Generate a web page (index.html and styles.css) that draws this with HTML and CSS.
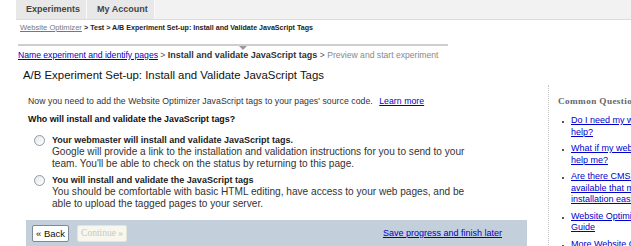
FILE: index.html
```html
<!DOCTYPE html>
<html lang="en">
<head>
    <meta charset="UTF-8">
    <title>Website Optimizer</title>
    <link rel="stylesheet" href="styles.css">
</head>
<body>

<div class="topbar">
    <ul class="tabs">
        <li>Experiments</li>
        <li>My Account</li>
    </ul>
</div>

<div class="crumbs">
    <a href="#">Website Optimizer</a> <b>&gt; Test &gt; A/B Experiment Set-up: Install and Validate JavaScript Tags</b>
</div>

<div class="steps">
    <a href="#">Name experiment and identify pages</a>
    <span class="sep">&gt;</span>
    <span class="current">Install and validate JavaScript tags</span>
    <span class="sep">&gt;</span>
    <span class="next">Preview and start experiment</span>
</div>

<h1>A/B Experiment Set-up: Install and Validate JavaScript Tags</h1>

<div class="layout">
    <div class="main">
        <p class="intro">Now you need to add the Website Optimizer JavaScript tags to your pages' source code. <a href="#">Learn more</a></p>
        <h2 class="question">Who will install and validate the JavaScript tags?</h2>

        <div class="option first">
            <span class="radio"></span>
            <div class="option-text">
                <b>Your webmaster will install and validate JavaScript tags.</b>
                <p>Google will provide a link to the installation and validation instructions for you to send to your team. You'll be able to check on the status by returning to this page.</p>
            </div>
        </div>
        <div class="option">
            <span class="radio"></span>
            <div class="option-text">
                <b>You will install and validate the JavaScript tags</b>
                <p>You should be comfortable with basic HTML editing, have access to your web pages, and be able to upload the tagged pages to your server.</p>
            </div>
        </div>

        <div class="actions">
            <button class="btn">&laquo; Back</button>
            <button class="btn disabled">Continue &raquo;</button>
            <a href="#" class="save">Save progress and finish later</a>
        </div>
    </div>

    <div class="aside">
        <h3>Common Questions</h3>
        <ul>
            <li><a href="#">Do I need my webmaster's help?</a></li>
            <li><a href="#">What if my webmaster can't help me?</a></li>
            <li><a href="#">Are there CMS plugins available that make installation easier?</a></li>
            <li><a href="#">Website Optimizer Installation Guide</a></li>
            <li><a href="#">More Website Optimizer help</a></li>
        </ul>
    </div>
</div>

</body>
</html>
```

FILE: styles.css
```css
*{
    margin: 0;
    padding: 0;
}
html, body{
    overflow: hidden;
}
body{
    width: 760px;
    font-family: "Liberation Sans", Arial, sans-serif;
    font-size: 10px;
    color: #333;
    background: #fff;
}
a{
    color: #0000cc;
}

/* top tabs */
.topbar{
    height: 19px;
    margin-left: 16px;
    background: #f2f2f2;
    border-bottom: 1px solid #dcdcdc;
}
.tabs{
    display: flex;
    height: 19px;
}
.tabs li{
    list-style: none;
    padding: 0 6px 0 10px;
    line-height: 19px;
    font-size: 9px;
    font-weight: bold;
    color: #444;
    background: #e8e8e8;
    border-right: 1px solid #fafafa;
}

/* breadcrumb */
.crumbs{
    height: 23px;
    padding: 1px 0 0 20px;
    line-height: 14px;
    font-size: 7.6px;
    color: #222;
}
.crumbs a{
    color: #777;
}
.crumbs b{
    font-size: 7.1px;
}

/* step line */
.steps{
    width: 430px;
    margin-left: 18px;
    border-top: 2px solid #cfcfcf;
    padding-top: 2px;
    line-height: 14px;
    font-size: 8.6px;
    color: #555;
}
.steps .current{
    position: relative;
    font-size: 9px;
    font-weight: bold;
    color: #333;
}
.steps .current::after{
    content: "";
    position: absolute;
    left: 50%;
    top: -4px;
    margin-left: -4px;
    border: 4px solid transparent;
    border-top-color: #999;
    border-bottom: 0;
}
.steps .next{
    color: #888;
}

h1{
    margin: 5px 0 0 23px;
    line-height: 16px;
    font-size: 11.4px;
    font-weight: normal;
    color: #111;
}

/* body */
.layout{
    display: flex;
    margin-top: 2px;
}
.main{
    width: 501px;
    margin-left: 26px;
}
.intro{
    padding: 10px 0 0 2px;
    line-height: 12px;
    font-size: 8.7px;
    letter-spacing: 0.05px;
}
.intro a{
    margin-left: 4px;
}
.question{
    margin-top: 5px;
    padding-left: 2px;
    line-height: 14px;
    font-size: 8.9px;
    color: #111;
}
.option{
    display: flex;
    gap: 7px;
    margin-top: 4px;
    padding-left: 8px;
    line-height: 12px;
}
.option.first{
    margin-top: 8px;
}
.option-text{
    width: 425px;
    font-size: 10.1px;
}
.option-text b{
    font-size: 9px;
    color: #222;
}
.radio{
    flex: none;
    width: 9px;
    height: 9px;
    margin-top: 1px;
    border: 1px solid #8d9aa6;
    border-radius: 50%;
    background: linear-gradient(135deg, #e6e6e6, #fff);
}

.actions{
    display: flex;
    align-items: center;
    gap: 8px;
    height: 26px;
    margin-top: 10px;
    padding: 0 25px 0 6px;
    background: #c3cfdb;
}
.btn{
    height: 17px;
    padding: 0 3px;
    font-family: "Liberation Sans", Arial, sans-serif;
    font-size: 9.5px;
    color: #111;
    background: #fff;
    border: 1px solid #7c8a98;
    border-radius: 2px;
}
.btn.disabled{
    font-family: "Liberation Serif", serif;
    color: #c8c8c0;
    background: #f7f7ee;
    border-color: #e4e4da;
}
.save{
    margin-left: auto;
    font-size: 9px;
}

/* sidebar */
.aside{
    width: 170px;
    margin-left: 21px;
    padding-left: 9px;
    border-left: 1px dotted #c4c4c4;
}
.aside h3{
    padding-top: 10px;
    line-height: 12px;
    font-family: "Liberation Serif", serif;
    font-size: 9.2px;
    letter-spacing: 0.4px;
    color: #666;
}
.aside ul{
    width: 134px;
    margin-top: 8px;
}
.aside li{
    list-style: none;
    position: relative;
    padding-left: 13px;
    margin-bottom: 5px;
    line-height: 11.5px;
    font-size: 9px;
}
.aside li::before{
    content: "";
    position: absolute;
    left: 4px;
    top: 6px;
    width: 2px;
    height: 2px;
    background: #555;
}
```
